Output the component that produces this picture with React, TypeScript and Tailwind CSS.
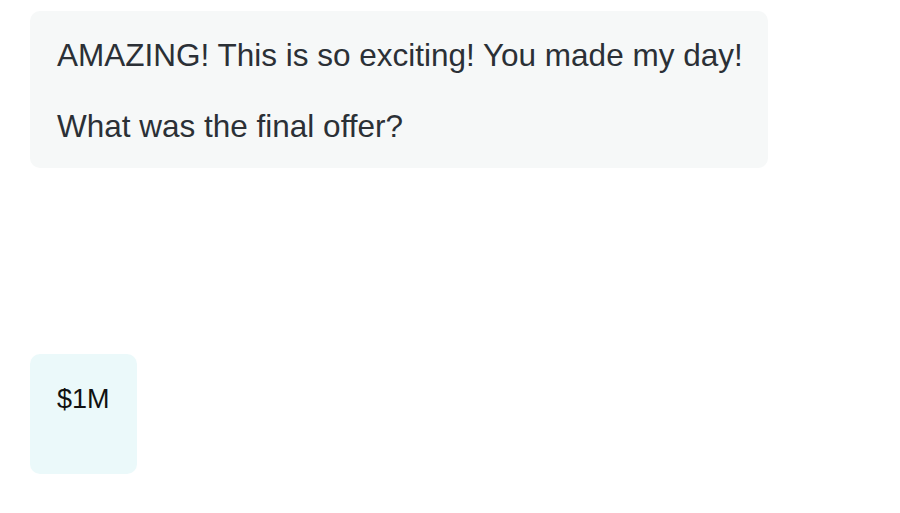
export default function App() {
  return (
    <div className="min-h-screen bg-white font-['Liberation_Sans',Arial,sans-serif]">
      <div className="pl-[30px] pt-[11px]">
        <div className="w-[738px] rounded-[10px] bg-[#f6f8f8] px-[27px] pt-[26px] pb-[24px] text-[31.5px] leading-[36px] whitespace-nowrap text-[#2b3036]">
          <p>AMAZING! This is so exciting! You made my day!</p>
          <p className="mt-[35px]">What was the final offer?</p>
        </div>

        <div className="mt-[186px] h-[120px] w-[107px] rounded-[10px] bg-[#ebf9fa] px-[27px] pt-[30px] text-[27px] leading-[30px] whitespace-nowrap text-[#111111]">
          $1M
        </div>
      </div>
    </div>
  );
}
